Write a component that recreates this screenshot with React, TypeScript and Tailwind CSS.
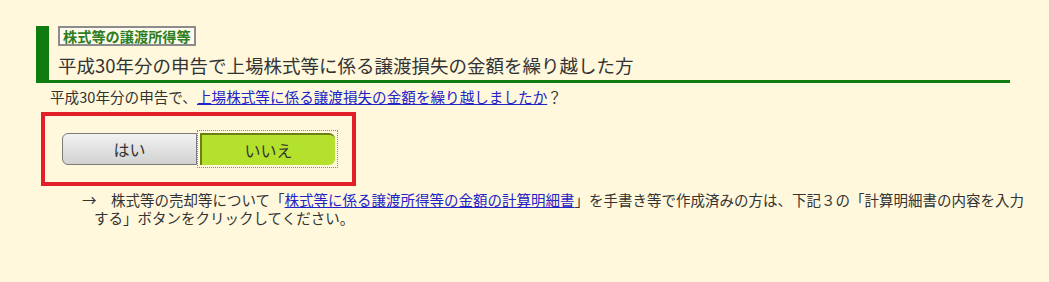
export default function App() {
  return (
    <div className="min-h-screen bg-[#fff8dc] pt-[26px] font-['Noto_Sans_CJK_JP',sans-serif] text-[#333]">
      {/* heading with green bar */}
      <div className="ml-[36px] w-[974px] border-b-[3px] border-l-[13px] border-[#107c10] pl-[9px]">
        <div className="w-fit border-2 border-[#8c8c8c] bg-[#fffcee] px-[3px] text-[14.2px] leading-[16px] font-bold text-[#2f7d1e]">
          株式等の譲渡所得等
        </div>
        <h2 className="mt-[6px] pb-[2px] text-[18.5px] leading-[26px] font-normal">
          平成30年分の申告で上場株式等に係る譲渡損失の金額を繰り越した方
        </h2>
      </div>

      <p className="mt-[4px] ml-[50px] text-[14.6px] leading-[20px]">
        平成30年分の申告で、
        <a href="#" className="text-[#2323c8] underline">
          上場株式等に係る譲渡損失の金額を繰り越しましたか
        </a>
        ？
      </p>

      {/* answer buttons */}
      <div className="mt-[5px] ml-[41px] flex h-[74px] w-[315px] items-center border-4 border-[#e3202a] pl-[17px]">
        <button className="h-[32px] w-[135px] rounded-l-[6px] border border-[#7b7b7b] bg-gradient-to-b from-[#f2f2f2] to-[#d2d2d2] text-[16px] text-[#333]">
          はい
        </button>
        <div className="border border-dotted border-[#8a8a6a] p-[2px]">
          <button className="block h-[32px] w-[135px] rounded-r-[6px] border-t-2 border-l-2 border-[#6b7f14] bg-[#b4e12c] text-[16px] text-[#333]">
            いいえ
          </button>
        </div>
      </div>

      <p className="mt-[5px] w-[1026px] pl-[94px] -indent-3 text-[14.5px] leading-[18px]">
        →　株式等の売却等について「
        <a href="#" className="text-[#2323c8] underline">
          株式等に係る譲渡所得等の金額の計算明細書
        </a>
        」を手書き等で作成済みの方は、下記３の「計算明細書の内容を入力する」ボタンをクリックしてください。
      </p>
    </div>
  );
}
